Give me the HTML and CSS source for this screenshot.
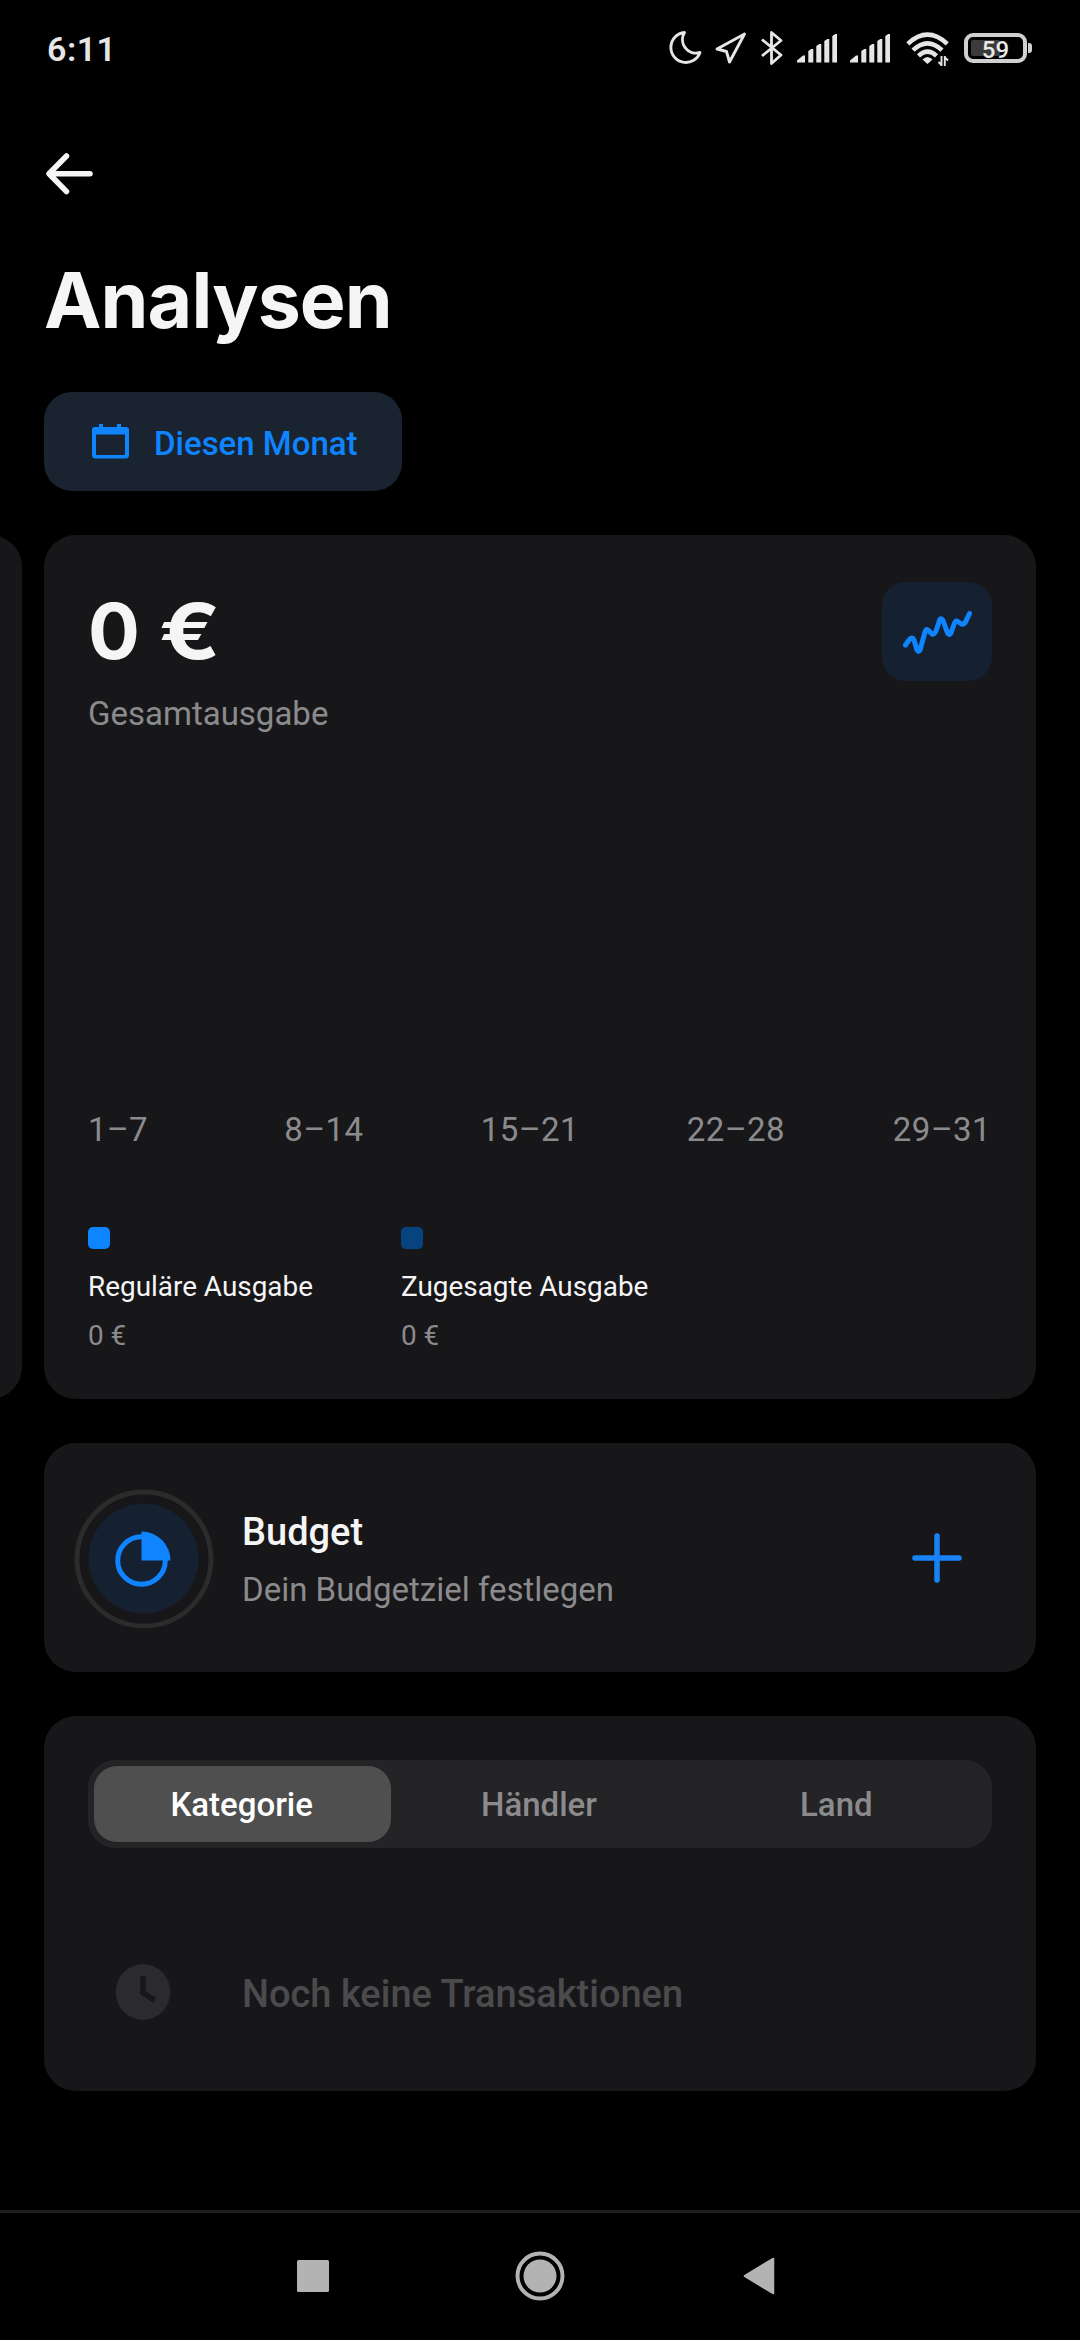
FILE: index.html
```html
<!DOCTYPE html>
<html lang="de">
<head>
<meta charset="utf-8">
<title>Analysen</title>
<link rel="stylesheet" href="styles.css">
</head>
<body>
<header class="status">
  <span class="clock">6:11</span>
  <div class="status-icons">
    <svg class="moon" width="34" height="36" viewBox="0 0 34 36" fill="none" stroke="#e6e6e6" stroke-width="2.9" stroke-linejoin="round"><path d="M16.5 2.5A15 15 0 1 0 32 22.5A13.5 13.5 0 0 1 16.5 2.5Z"/></svg>
    <svg class="locate" width="32" height="34" viewBox="0 0 32 34" fill="none" stroke="#e6e6e6" stroke-width="2.9" stroke-linejoin="round"><path d="M29.5 3L2 18L11.5 20.500L14.500 31Z"/></svg>
    <svg class="bluetooth" width="24" height="36" viewBox="0 0 24 36" fill="none" stroke="#e6e6e6" stroke-width="2.8" stroke-linejoin="round"><path d="M2 9.500L21 25L11.500 33.500V2.500L21 10.500L2 26"/></svg>
    <svg class="signal" width="40" height="30" viewBox="0 0 40 30" fill="#e6e6e6"><path d="M0 29.500V27.500L6 22.500H8V29.500ZM11.300 29.500V18L14.300 16H16.300V29.500ZM19.300 29.500V13L22.300 11H24.300V29.500ZM27.300 29.500V8L30.300 6H32.300V29.500ZM35.300 29.500V3L38.300 1H40V29.500Z"/></svg>
    <svg class="signal" width="40" height="30" viewBox="0 0 40 30" fill="#e6e6e6"><path d="M0 29.500V27.500L6 22.500H8V29.500ZM11.300 29.500V18L14.300 16H16.300V29.500ZM19.300 29.500V13L22.300 11H24.300V29.500ZM27.300 29.500V8L30.300 6H32.300V29.500ZM35.300 29.500V3L38.300 1H40V29.500Z"/></svg>
    <svg class="wifi" width="44" height="34" viewBox="0 0 44 34" fill="none" stroke="#e6e6e6"><path stroke-width="4.500" d="M1.800 11.800Q21.500 -6.500 41.200 11.800"/><path stroke-width="4.500" d="M7 18.200Q21.500 4.500 36 18.200"/><path stroke-width="4.500" d="M12.500 23.800Q21.500 15.500 30.500 23.800"/><path fill="#e6e6e6" stroke="none" d="M16.500 27.500Q21.500 22.500 26.500 27.500L21.500 32Z"/><path stroke-width="1.900" d="M35.500 24V34M32.500 30L35.500 33M38.800 34V24M38.800 25.500L42 28.500"/></svg>
    <div class="battery"><div class="charge"></div><span>59</span></div>
  </div>
</header>

<main>
  <svg class="back" width="48" height="42" viewBox="0 0 48 42" fill="none" stroke="#f5f5f5" stroke-width="5.500" stroke-linecap="round" stroke-linejoin="round"><path d="M20.500 3L3 20.800L20.500 38.500M3.500 20.800H44"/></svg>
  <h1>Analysen</h1>
  <button class="period">
    <svg width="38" height="36" viewBox="0 0 38 36" fill="#0f84ff"><path fill-rule="evenodd" d="M8 1H12V4H26V1H30V4H35Q38 4 38 7V32Q38 35.500 34.500 35.500H4.500Q1 35.500 1 32V7Q1 4 4 4H8ZM5 11.500V31Q5 32 6 32H33Q34 32 34 31V11.500Z"/></svg>
    <span>Diesen Monat</span>
  </button>

  <div class="carousel">
    <section class="card previous"></section>
    <section class="card spending">
      <div class="spending-head">
        <div>
          <div class="amount">0 <span class="currency">€</span></div>
          <div class="muted total-label">Gesamtausgabe</div>
        </div>
        <button class="trend">
          <svg width="70" height="44" viewBox="0 0 70 44" fill="none" stroke="#0f84ff" stroke-width="5" stroke-linecap="round" stroke-linejoin="round"><path d="M3.500 35L7 30Q10 26 12 30L15 40Q16.500 43 18 40L23 22Q24 18 26.500 20.500L30 24Q32 25 34 21L37.500 10.500Q39 7 41 10.500L45.500 23Q47 26 49 23L52.500 13Q54 9.500 56.500 12L59.500 14Q61.500 15 63.500 12L67.500 3.500"/></svg>
        </button>
      </div>
      <div class="axis muted"><span>1–7</span><span>8–14</span><span>15–21</span><span>22–28</span><span>29–31</span></div>
      <div class="legend">
        <div><i class="swatch"></i><p>Reguläre Ausgabe</p><p class="muted">0 €</p></div>
        <div><i class="swatch dim"></i><p>Zugesagte Ausgabe</p><p class="muted">0 €</p></div>
      </div>
    </section>
  </div>

  <section class="card budget">
    <svg width="140" height="140" viewBox="0 0 140 140"><circle cx="70" cy="71" r="67" fill="none" stroke="#2b2b2c" stroke-width="4.800"/><circle cx="69.500" cy="70.500" r="55" fill="#152031"/><circle cx="67.500" cy="72.500" r="23.800" fill="none" stroke="#0f84ff" stroke-width="5"/><path fill="#0f84ff" d="M67.500 43.500A29 29 0 0 1 96.500 72.500H67.500Z"/></svg>
    <div class="budget-text">
      <h2>Budget</h2>
      <p class="muted">Dein Budgetziel festlegen</p>
    </div>
    <svg width="50" height="50" viewBox="0 0 50 50" stroke="#1783f5" stroke-width="5.500" stroke-linecap="round"><path d="M25 3V47M3 25H47"/></svg>
  </section>

  <section class="card breakdown">
    <nav class="tabs"><span class="active">Kategorie</span><span>Händler</span><span>Land</span></nav>
    <div class="empty">
      <svg width="56" height="58" viewBox="0 0 56 58"><ellipse cx="28" cy="29" rx="27.300" ry="28" fill="#2b2b2d"/><path d="M28 13V29.500L39.500 37.500" fill="none" stroke="#171719" stroke-width="5.500"/></svg>
      <span>Noch keine Transaktionen</span>
    </div>
  </section>
</main>

<footer class="system-nav">
  <svg width="32" height="32" viewBox="0 0 32 32"><rect width="32" height="32" rx="1.500" fill="#b3b3b3"/></svg>
  <svg class="home" width="50" height="50" viewBox="0 0 50 50"><circle cx="25" cy="25" r="22.500" fill="none" stroke="#b3b3b3" stroke-width="4"/><circle cx="25" cy="25" r="16.500" fill="#b3b3b3"/></svg>
  <svg width="32" height="38" viewBox="0 0 32 38"><path d="M2 19L30 2V36Z" fill="#b3b3b3" stroke="#b3b3b3" stroke-width="2.500" stroke-linejoin="round"/></svg>
</footer>
</body>
</html>
```
FILE: styles.css
```css
* { box-sizing: border-box; }
body {
  margin: 0;
  width: 1080px;
  height: 2340px;
  display: flex;
  flex-direction: column;
  background: #000;
  color: #f5f5f5;
  font-family: Roboto, sans-serif;
  font-size: 33px;
  overflow: hidden;
}
svg { display: block; flex: none; }
h1, h2, p { margin: 0; }
button { border: 0; padding: 0; font: inherit; }

.status {
  height: 96px;
  padding: 0 54px 0 47px;
  display: flex;
  justify-content: space-between;
  align-items: center;
}
.clock { margin-top: 1px; font-size: 34px; font-weight: 600; line-height: 40px; color: #e6e6e6; letter-spacing: 0.5px; }
.status-icons { display: flex; align-items: center; }
.locate { margin-left: 13px; }
.bluetooth { margin-left: 13px; }
.signal { margin-left: 13px; }
.wifi { margin: 2px 0 0 16px; }
.battery {
  width: 63px;
  height: 30px;
  margin: 0 -1px 0 14px;
  position: relative;
  border: 4px solid #d0d0d0;
  border-radius: 9px;
  display: grid;
  place-items: center;
  font-size: 24px;
  font-weight: 500;
  line-height: 22px;
  color: #e8e8e8;
}
.battery::after {
  content: "";
  position: absolute;
  left: 60px;
  top: 6px;
  width: 4px;
  height: 10px;
  border-radius: 0 3px 3px 0;
  background: #d0d0d0;
}
.charge { position: absolute; left: 3px; top: 3px; width: 29px; height: 16px; border-radius: 2px; background: #3b3b3b; }
.battery span { position: relative; padding-top: 2px; }

main { flex: 1; padding: 0 44px; }
.back { margin: 57px 0 0 2px; }
h1 {
  margin-top: 58px;
  font-family: Inter, sans-serif;
  font-size: 77px;
  font-weight: 700;
  line-height: 94px;
  letter-spacing: -0.9px;
}
.period {
  width: 358px;
  height: 99px;
  margin-top: 45px;
  padding: 0 0 0 47px;
  display: flex;
  align-items: center;
  gap: 25px;
  border-radius: 28px;
  background: #192430;
  color: #0f84ff;
  font-weight: 500;
}
.period svg { margin-top: -2px; }
.period span { margin-top: 3px; }

.card { border-radius: 32px; background: #171719; }
.carousel { margin: 44px 0 0 -1014px; width: 2050px; display: flex; gap: 22px; }
.previous { width: 1036px; flex: none; margin-left: -44px; }
.spending { width: 992px; height: 864px; padding: 47px 44px 0; }
.spending-head { display: flex; justify-content: space-between; }
.amount {
  padding-top: 2px;
  font-family: Inter, sans-serif;
  font-size: 77px;
  font-weight: 700;
  line-height: 94px;
}
/* Widens the narrow euro sign to the weight of the figures beside it */
.currency { display: inline-block; margin-left: 1px; transform: scaleX(1.17); transform-origin: left; }
.muted { color: #8b8b8d; }
.total-label { margin-top: 16px; line-height: 40px; }
.trend { width: 110px; height: 99px; display: grid; place-items: center; border-radius: 24px; background: #152031; }
.axis {
  width: 1030px;
  margin: 376px 0 0 -73px;
  display: grid;
  grid-template-columns: repeat(5, 1fr);
  text-align: center;
  line-height: 40px;
  letter-spacing: 0.5px;
}
.legend { margin-top: 77px; display: flex; gap: 88px; font-size: 27.9px; line-height: 34px; }
.swatch { display: block; width: 22px; height: 22px; border-radius: 5px; background: #0f84ff; }
.swatch.dim { background: #07437f; }
.legend p { margin-top: 21px; }
.legend p + p { margin-top: 15px; }

.budget {
  height: 229px;
  margin-top: 44px;
  padding: 0 74px 0 30px;
  display: flex;
  align-items: center;
}
.budget-text { flex: 1; margin: 4px 0 0 28px; }
h2 { font-size: 38px; font-weight: 500; line-height: 46px; }
.budget-text p { margin-top: 15px; line-height: 40px; }

.breakdown { height: 375px; margin-top: 44px; padding: 44px 44px 0; }
.tabs {
  height: 88px;
  padding: 6px;
  display: grid;
  grid-template-columns: repeat(3, 1fr);
  border-radius: 27px;
  background: #242426;
  color: #8b8b8d;
  font-weight: 500;
}
.tabs span { display: grid; place-items: center; padding: 1px 2px 0 0; border-radius: 23px; }
.tabs .active { background: #4f4f50; color: #fff; }
.empty {
  margin: 115px 0 0 27px;
  display: flex;
  align-items: center;
  gap: 71px;
  font-size: 38px;
  font-weight: 500;
  color: #4b4b4d;
}
.empty span { padding-top: 3px; }

.system-nav {
  height: 130px;
  border-top: 3px solid #1f1f1f;
  padding: 2px 0 4px 297px;
  display: flex;
  align-items: center;
}
.home { margin: 0 178px 0 186px; }
```
